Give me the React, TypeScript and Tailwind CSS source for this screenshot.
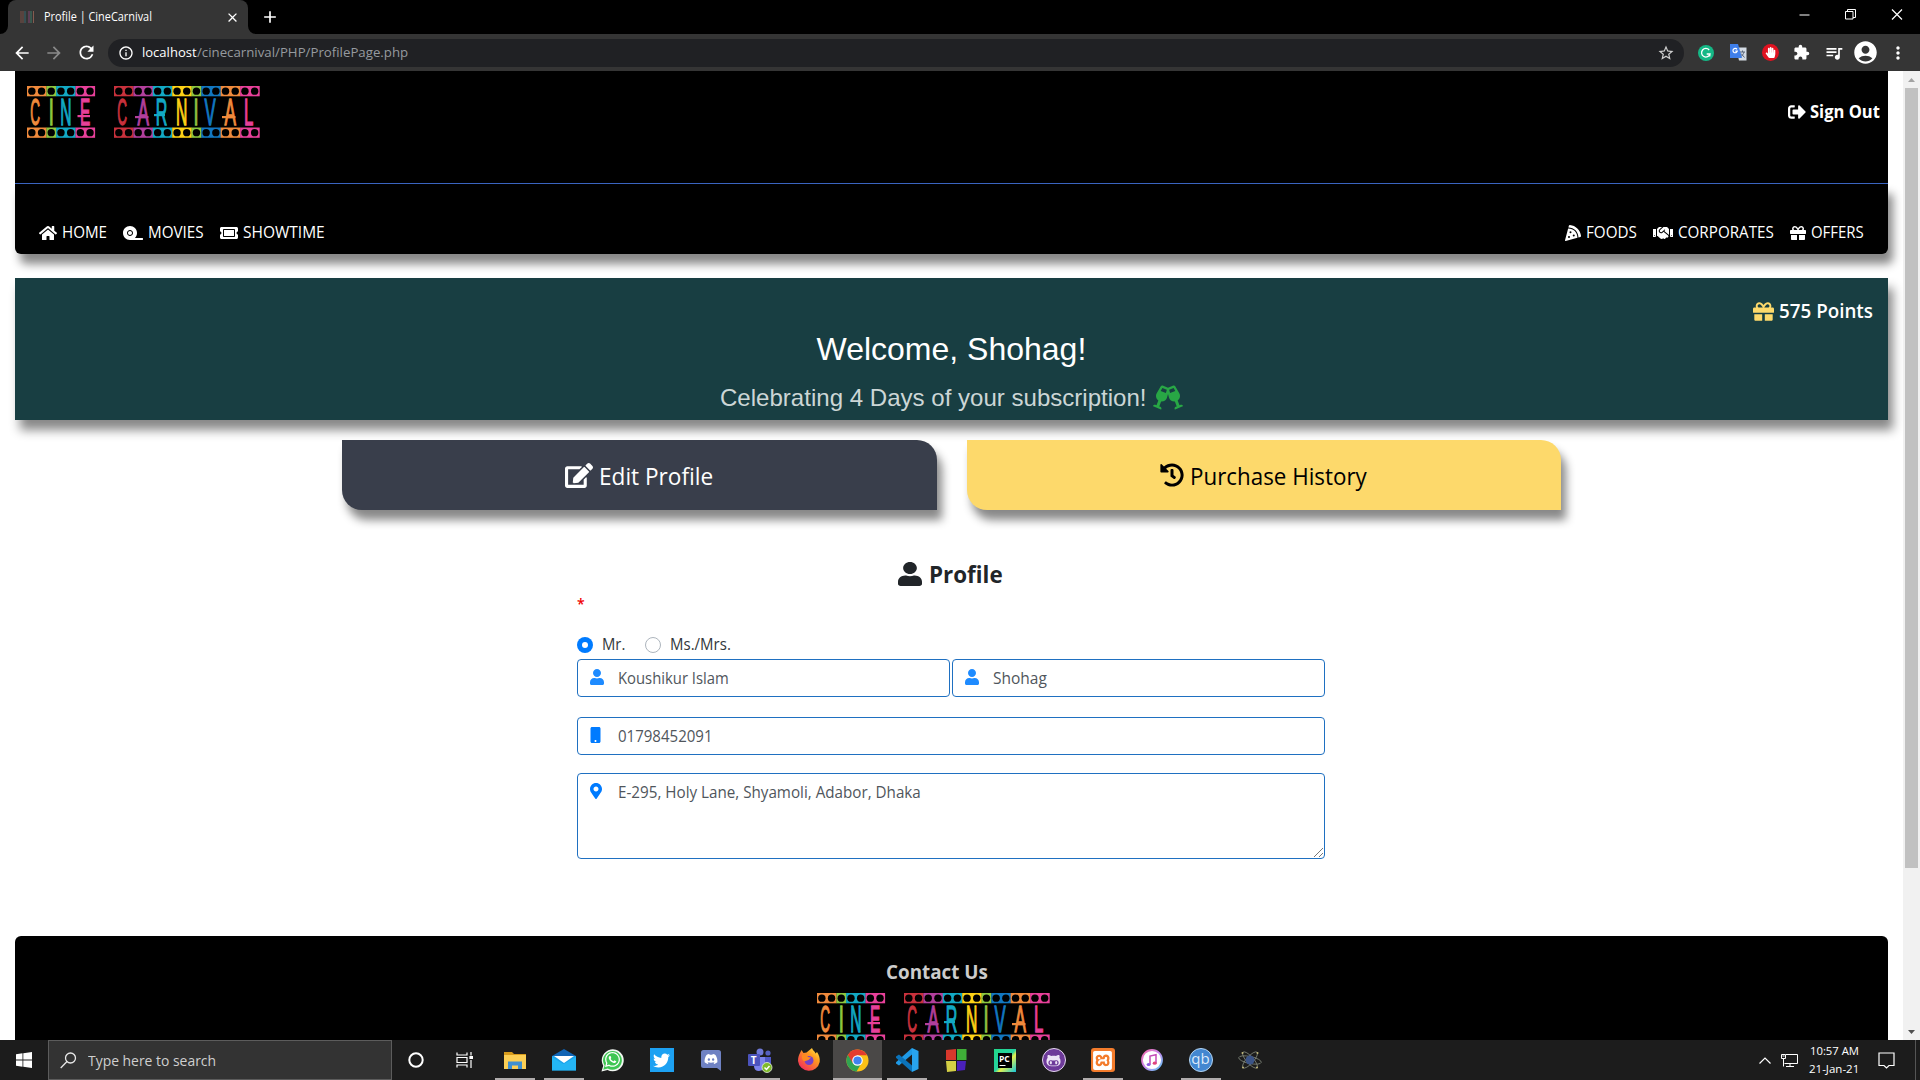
import React, { useLayoutEffect, useRef } from "react";
import {
  FaHome, FaTape, FaTicketAlt, FaPizzaSlice, FaHandshake, FaGift, FaSignOutAlt, FaGlassCheers, FaEdit,
  FaHistory, FaUser, FaMobile, FaMapMarkerAlt, FaHandPaper, FaTwitter, FaWhatsapp, FaDiscord, FaGithubAlt,
  FaMusic,
} from "react-icons/fa";
import {
  MdArrowBack, MdArrowForward, MdRefresh, MdInfoOutline, MdStarBorder, MdExtension, MdQueueMusic,
  MdAccountCircle, MdMoreVert, MdClose, MdAdd,
} from "react-icons/md";
import { SiXampp } from "react-icons/si";

/* One line of text condensed or widened to the width of its box. */
function Fit({ className, children }: { className: string; children: string }) {
  const inner = useRef<HTMLSpanElement>(null);
  useLayoutEffect(() => {
    const el = inner.current;
    if (!el || !el.parentElement) return;
    const apply = () => {
      el.style.transform = `scaleX(${el.parentElement!.clientWidth / el.offsetWidth})`;
    };
    apply();
    document.fonts.ready.then(apply);
  }, []);
  return (
    <span className={"inline-block shrink-0 whitespace-nowrap " + className}>
      <span ref={inner} className="inline-block origin-left">{children}</span>
    </span>
  );
}

/* x: left edge of the glyph's cell, s: its horizontal scale, bar: x start, x end and y of the swash */
type Seg = { ch: string; n: number; color: string; x: number; s: number; bar?: [number, number, number] };

const CINE: Seg[] = [
  { ch: "C", n: 2, color: "#f08a3c", x: 3.2, s: 0.37 },
  { ch: "I", n: 1, color: "#8cc63f", x: 21.8, s: 0.5 },
  { ch: "N", n: 2, color: "#12a9c4", x: 33.2, s: 0.43 },
  { ch: "E", n: 2, color: "#e8409a", x: 53, s: 0.42, bar: [50.5, 63, 32] },
];
const CARNIVAL: Seg[] = [
  { ch: "C", n: 2, color: "#c8313c", x: 90.2, s: 0.37 },
  { ch: "A", n: 2, color: "#b23f9c", x: 110.500, s: 0.47, bar: [108, 121.5, 33] },
  { ch: "R", n: 2, color: "#12a9c4", x: 128.7, s: 0.44, bar: [127, 138, 31] },
  { ch: "N", n: 2, color: "#fdd116", x: 149, s: 0.43 },
  { ch: "I", n: 1, color: "#8cc63f", x: 166.400, s: 0.5 },
  { ch: "V", n: 2, color: "#1277c0", x: 177.5, s: 0.46 },
  { ch: "A", n: 2, color: "#f08a3c", x: 197.5, s: 0.47, bar: [195, 208.5, 33] },
  { ch: "L", n: 2, color: "#e8409a", x: 217, s: 0.46 },
];

function LogoWord({ segs, x0 }: { segs: Seg[]; x0: number }) {
  const pitch = 9.7;
  let k = 0;
  return (
    <g>
      {segs.map((s, i) => {
        const start = x0 + k * pitch;
        const circles = Array.from({ length: s.n }, (_, j) => start + (j + 0.5) * pitch);
        k += s.n;
        return (
          <g key={i} fill={s.color}>
            {[0, 41.5].map((y) => (
              <g key={y}>
                <rect x={start} y={y} width={s.n * pitch + 0.2} height="10.3" />
                {circles.map((c) => <circle key={c} cx={c} cy={y + 5.15} r="3.700" fill="#000" />)}
              </g>
            ))}
            <text
              transform={`translate(${s.x} 39) scale(${s.s} 1)`}
              fontSize="36.500" fontFamily="Liberation Sans" stroke={s.color} strokeWidth="1" vectorEffect="non-scaling-stroke"
            >
              {s.ch}
            </text>
            {s.bar && <rect x={s.bar[0]} y={s.bar[2] - 3} width={s.bar[1] - s.bar[0]} height="2.200" />}
          </g>
        );
      })}
    </g>
  );
}

function Logo() {
  return (
    <svg width="233" height="52" viewBox="0 0 233 52" className="block shrink-0">
      <LogoWord segs={CINE} x0={0} />
      <LogoWord segs={CARNIVAL} x0={87} />
    </svg>
  );
}

function Browser() {
  return (
    <div className="shrink-0 bg-black text-white">
      <div className="flex h-[34px] items-end">
        <svg width="8" height="8" className="block"><path d="M8 0v8H0a8 8 0 0 0 8-8z" fill="#353535" /></svg>
        <div className="flex h-[34px] w-[240px] items-center rounded-t-[8px] bg-[#353535] pl-3">
          <svg width="15" height="14" viewBox="0 0 15 14">
            <path d="M1 1v12M3 1v12" stroke="#7c5348" />
            <path d="M5 1v12" stroke="#386b70" />
            <path d="M9 1v12" stroke="#864572" />
            <path d="M11 1v12" stroke="#3e7c69" />
            <path d="M13.500 1v12" stroke="#855c50" />
          </svg>
          <Fit className="ml-[9px] w-[108px] text-[12px]">Profile | CineCarnival</Fit>
          <MdClose className="ml-[73px] h-[15px] w-[15px]" />
        </div>
        <svg width="8" height="8" className="block"><path d="M0 0v8h8a8 8 0 0 1-8-8z" fill="#353535" /></svg>
        <MdAdd className="mb-[7px] ml-[4px] h-5 w-5" />
        <div className="mr-[17px] mb-[14px] ml-auto flex items-center gap-[35px]">
          <svg width="11" height="11"><path d="M0.500 6h10" stroke="#fff" /></svg>
          <svg width="11" height="11" fill="none" stroke="#fff"><path d="M.5 2.500h7.500v7.500h-7.500zM2.500 2.500v-2h8v8h-2.500" /></svg>
          <svg width="12" height="11" stroke="#fff" strokeWidth="1.200"><path d="M1 .5l10 10M11 .5l-10 10" /></svg>
        </div>
      </div>
      <div className="flex h-[37px] items-center bg-[#353535]">
        <MdArrowBack className="ml-[12px] h-5 w-5" />
        <MdArrowForward className="ml-[12px] h-5 w-5 text-[#8a8a8a]" />
        <MdRefresh className="ml-[12px] h-[21px] w-[21px]" />
        <div className="ml-[11px] flex h-7 w-[1576px] items-center rounded-full bg-[#202124] pl-[10px] text-[14px]">
          <MdInfoOutline className="h-4 w-4" />
          <Fit className="ml-[8px] w-[55px] text-[13.500px]">localhost</Fit>
          <Fit className="w-[211px] text-[13.500px] text-[#969a9f]">/cinecarnival/PHP/ProfilePage.php</Fit>
          <MdStarBorder className="mr-[9px] ml-auto h-[18px] w-[18px] text-[#d0d0d0]" />
        </div>
        <svg width="16" height="16" viewBox="0 0 16 16" className="ml-[14px]">
          <circle cx="8" cy="8" r="8" fill="#15b886" />
          <path d="M11.200 5A4.300 4.300 0 1 0 12 9H8.700M12 9l-.3 2.500" fill="none" stroke="#fff" strokeWidth="1.300" />
        </svg>
        <svg width="17" height="17" viewBox="0 0 17 17" className="ml-[16px]">
          <path d="M6 3.500h10.500v13H9z" fill="#d4dbe4" />
          <path d="M10 8h5M12.500 6.500V8M14 8c-.5 2-2 4-3.500 5M11 9.500l3.500 4" stroke="#5a6678" fill="none" />
          <path d="M0 0h8l4 14H0z" fill="#3f7fea" />
          <path d="M7 5.300A2.200 2.200 0 1 0 7.300 7.200H5.300" stroke="#fff" strokeWidth="1.200" fill="none" />
        </svg>
        <div className="ml-[15px] flex h-[17px] w-[17px] items-center justify-center rounded-full bg-[#e01220]">
          <FaHandPaper className="h-[11px] w-[11px]" />
        </div>
        <MdExtension className="ml-[14px] h-[17px] w-[17px]" />
        <MdQueueMusic className="ml-[14px] h-5 w-5" />
        <MdAccountCircle className="ml-[8px] h-[27px] w-[27px]" />
        <MdMoreVert className="ml-[9px] h-5 w-5" />
      </div>
    </div>
  );
}

function Header() {
  return (
    <header className="w-[1873px] text-white">
      <div className="flex h-[112px] justify-between bg-black pt-[15px] pr-[8px] pl-[12px]">
        <Logo />
        <div className="flex h-[52px] items-center">
          <FaSignOutAlt className="h-[18px] w-[18px]" />
          <Fit className="ml-[4px] w-[70px] text-[17px] font-bold">Sign Out</Fit>
        </div>
      </div>
      <div className="h-px bg-[#3a64c0]" />
      <nav className="flex h-[70px] items-center rounded-b-[6px] bg-black px-6 pt-[27px] text-[15.500px] shadow-[5px_10px_10px_#888888]">
        <FaHome className="h-4 w-[18px]" />
        <Fit className="ml-[5px] w-[45px]">HOME</Fit>
        <FaTape className="ml-[16px] h-4 w-5" />
        <Fit className="ml-[5px] w-[56px]">MOVIES</Fit>
        <FaTicketAlt className="ml-[16px] h-4 w-[18px]" />
        <Fit className="ml-[5px] w-[82px]">SHOWTIME</Fit>
        <FaPizzaSlice className="ml-auto h-4 w-4" />
        <Fit className="ml-[5px] w-[51px]">FOODS</Fit>
        <FaHandshake className="ml-[16px] h-4 w-5" />
        <Fit className="ml-[5px] w-[96px]">CORPORATES</Fit>
        <FaGift className="ml-[16px] h-4 w-4" />
        <Fit className="ml-[5px] w-[53px]">OFFERS</Fit>
      </nav>
    </header>
  );
}

function Banner() {
  return (
    <section className="mt-6 flex h-[142px] w-[1873px] flex-col items-center bg-[#183e42] text-white shadow-[5px_10px_10px_#888888]">
      <div className="mt-[19px] mr-[15px] flex h-7 items-center self-end">
        <FaGift className="h-[21px] w-[21px] text-[#fdd96b]" />
        <Fit className="ml-[5px] w-[94px] text-[19px] font-semibold">575 Points</Fit>
      </div>
      <div className="mt-[4px] flex h-10 items-center font-['Liberation_Sans',sans-serif] text-[32px]">
        <Fit className="w-[270px]">Welcome, Shohag!</Fit>
      </div>
      <div className="mt-[13px] flex h-8 items-center font-['Liberation_Sans',sans-serif] text-[24px] text-[#ccd6d6]">
        <Fit className="w-[427px]">Celebrating 4 Days of your subscription!</Fit>
        <FaGlassCheers className="mb-[2px] ml-[6px] h-[25px] w-[30px] text-[#28a745]" />
      </div>
    </section>
  );
}

function Profile() {
  const field = "flex rounded-[4px] border border-[#1f70c1] bg-white pl-[12px] text-[15.500px] text-[#50565c]";
  return (
    <section className="ml-[562px] flex w-[748px] flex-col">
      <div className="mt-[46px] flex h-9 items-center justify-center pr-[2px] text-[#212529]">
        <FaUser className="h-6 w-[24px]" preserveAspectRatio="none" />
        <Fit className="ml-[7px] w-[74px] text-[23px] font-bold">Profile</Fit>
      </div>
      <div className="mt-[3px] h-[18px] text-[14px] leading-[18px] font-semibold text-[#f00000]">*</div>
      <div className="mt-[21px] flex h-[22px] items-center text-[15.500px] text-[#32373c]">
        <span className="flex h-4 w-4 items-center justify-center rounded-full bg-[#007bff]"><span className="h-[6px] w-[6px] rounded-full bg-white" /></span>
        <Fit className="ml-[9px] w-[23px]">Mr.</Fit>
        <span className="ml-[20px] h-4 w-4 rounded-full border border-[#adb5bd]" />
        <Fit className="ml-[9px] w-[61px]">Ms./Mrs.</Fit>
      </div>
      <div className="mt-[3px] flex gap-[2px]">
        <div className={field + " h-[38px] w-[373px] items-center"}>
          <FaUser className="mb-[2px] h-4 w-[14px] text-[#1e8bff]" />
          <Fit className="mt-[2px] ml-[14px] w-[111px]">Koushikur Islam</Fit>
        </div>
        <div className={field + " h-[38px] w-[373px] items-center"}>
          <FaUser className="mb-[2px] h-4 w-[14px] text-[#1e8bff]" />
          <Fit className="mt-[2px] ml-[14px] w-[54px]">Shohag</Fit>
        </div>
      </div>
      <div className={field + " mt-5 h-[38px] items-center"}>
        <FaMobile className="mb-[2px] h-4 w-[11px] text-[#007bff]" />
        <Fit className="mt-[2px] ml-[17px] w-[95px]">01798452091</Fit>
      </div>
      <div className={field + " mt-[18px] h-[86px] justify-between"}>
        <div className="flex">
          <FaMapMarkerAlt className="mt-[9px] h-4 w-3 text-[#007bff]" />
          <Fit className="mt-[7px] ml-[16px] w-[303px]">E-295, Holy Lane, Shyamoli, Adabor, Dhaka</Fit>
        </div>
        <svg width="11" height="11" className="self-end" stroke="#777"><path d="M1 10l9-9M6 10l4-4" /></svg>
      </div>
    </section>
  );
}

function Page() {
  return (
    <div className="flex h-[969px] shrink-0 overflow-hidden bg-white">
      <div className="h-full w-[1903px] overflow-hidden pl-[15px]">
        <Header />
        <Banner />
        <div className="mt-5 ml-[327px] flex gap-[30px] text-[23px]">
          <div className="flex h-[70px] w-[595px] items-center justify-center rounded-tr-[20px] rounded-bl-[20px] bg-[#393e4b] pt-[3px] pr-[2px] text-white shadow-[5px_10px_10px_#888888]">
            <FaEdit className="mb-[3px] h-[25px] w-[28px]" />
            <Fit className="ml-[6px] w-[114px]">Edit Profile</Fit>
          </div>
          <div className="flex h-[70px] w-[594px] items-center justify-center rounded-tr-[20px] rounded-bl-[20px] bg-[#fdd96b] pt-[3px] pr-[2px] text-black shadow-[5px_10px_10px_#888888]">
            <FaHistory className="mb-[3px] h-6 w-6" />
            <Fit className="ml-[6px] w-[177px]">Purchase History</Fit>
          </div>
        </div>
        <Profile />
        <footer className="mt-[77px] flex h-[180px] w-[1873px] flex-col items-center rounded-t-[6px] bg-black">
          <div className="mt-[22px] mr-[30px] flex h-7 items-center text-[19px] font-bold text-[#cccccc]">
            <Fit className="w-[102px]">Contact Us</Fit>
          </div>
          <div className="mt-[7px] mr-[37px]"><Logo /></div>
        </footer>
      </div>
      <div className="flex w-[17px] flex-col items-center bg-[#f1f1f1]">
        <div className="flex h-[17px] items-center"><svg width="7" height="4"><path d="M0 4l3.500-4L7 4z" fill="#a3a3a3" /></svg></div>
        <div className="h-[780px] w-[13px] bg-[#c1c1c1]" />
        <div className="mt-auto flex h-[17px] items-center"><svg width="7" height="4"><path d="M0 0l3.500 4L7 0z" fill="#505050" /></svg></div>
      </div>
    </div>
  );
}

function AppSlot({ children, open, active }: { children: React.ReactNode; open?: boolean; active?: boolean }) {
  return (
    <div className={"flex h-10 w-[49px] flex-col items-center justify-between " + (active ? "bg-[#4a4847]" : "")}>
      <div className="flex h-[38px] items-center pt-[2px]">{children}</div>
      {open && <div className={"h-[2px] shrink-0 bg-[#b0acac] " + (active ? "w-[49px]" : "w-10")} />}
    </div>
  );
}

function Taskbar() {
  return (
    <div className="flex h-10 shrink-0 items-center bg-[#1c1c1c] text-white">
      <svg width="16" height="16" viewBox="0 0 16 16" className="ml-4" fill="#fff"><path d="M0 2.200l6.500-.9v6.300H0zM7.300 1.200L16 0v7.600H7.300zM0 8.400h6.500v6.300L0 13.800zM7.300 8.400H16V16l-8.700-1.200z" /></svg>
      <div className="ml-4 flex h-10 w-[344px] items-center border border-[#5c5c5c] bg-[#333333] pl-[11px]">
        <svg width="17" height="17" fill="none" stroke="#e8e8e8" strokeWidth="1.300"><circle cx="10.500" cy="6" r="5" /><path d="M7 9.500L.7 16" /></svg>
        <Fit className="ml-[11px] w-[128px] text-[15px] text-[#cfcfcf]">Type here to search</Fit>
      </div>
      <div className="flex">
        <AppSlot><svg width="16" height="16" className="mr-[2px]"><circle cx="8" cy="8" r="6.700" fill="none" stroke="#fff" strokeWidth="2" /></svg></AppSlot>
        <AppSlot>
          <svg width="17" height="16" className="mr-[3px]" fill="none" stroke="#fff" strokeWidth="1.200"><path d="M1 .5v2.500h10V.5M1 15.500V13h10v2.500M1 5.500h10v5H1zM15 0v3.500M15 8v8" /><path d="M14 4.500h2.500v2H14z" fill="#fff" /></svg>
        </AppSlot>
        <AppSlot open>
          <svg width="22" height="19" viewBox="0 0 22 19">
            <path d="M0 1h8l2 2h12v5H0z" fill="#d79b1c" /><path d="M0 4h22v14H0z" fill="#fccf55" />
            <path d="M4 18v-7.500h14V18h-4v-3.500H8V18z" fill="#3f8fd0" />
          </svg>
        </AppSlot>
        <AppSlot open>
          <svg width="24" height="22" viewBox="0 0 24 22">
            <path d="M0 7L12 0l12 7v5H0z" fill="#1164b4" /><path d="M0 7h24v14.500H0z" fill="#1ba1ea" />
            <path d="M2 7h20l-10 7z" fill="#fff" /><path d="M0 8l12 7.500L0 21.500z" fill="#23b6f4" /><path d="M24 8v13.500H0z" fill="#2abdf8" fillOpacity=".7" />
          </svg>
        </AppSlot>
        <AppSlot>
          <svg width="23" height="23" viewBox="0 0 23 23"><path d="M0.500 22.500L2.200 16.800A11 11 0 1 1 6.500 21z" fill="#f2f7f2" /><path d="M2.200 20.800L3.600 16.500A9.400 9.400 0 1 1 6.800 19.500z" fill="#3fc653" /></svg>
          <FaWhatsapp className="-ml-[20px] mr-[3px] mb-[1px] h-[17px] w-[17px]" />
        </AppSlot>
        <AppSlot><div className="flex h-6 w-6 items-center justify-center bg-[#1da1f2]"><FaTwitter className="h-[17px] w-[17px]" /></div></AppSlot>
        <AppSlot>
          <svg width="20" height="21" viewBox="0 0 20 21"><path d="M2.500 0h15Q20 0 20 2.500V21l-4-3H2.500Q0 18 0 15.500v-13Q0 0 2.500 0z" fill="#6f82c3" /></svg>
          <FaDiscord className="-ml-[17px] mr-[3px] mb-[3px] h-[14px] w-[14px]" />
        </AppSlot>
        <AppSlot open>
          <svg width="26" height="25" viewBox="0 0 26 25">
            <circle cx="13" cy="4" r="3.500" fill="#6f79d8" /><circle cx="21" cy="5" r="2.600" fill="#5560c0" />
            <path d="M17 9h7v8q-1 4-6 4z" fill="#5059c9" /><path d="M7 9h11v9q-1 5-6 5t-5-5z" fill="#7b83eb" />
            <rect x="1" y="6" width="12" height="12" rx="1" fill="#4b53bc" />
            <text x="3.700" y="15.500" fontSize="10" fontWeight="700" fill="#fff" fontFamily="Open Sans">T</text>
            <circle cx="20" cy="19.500" r="5" fill="#7fba2a" stroke="#e8f0e0" strokeWidth=".8" /><path d="M17.500 19.500l2 2 3-3.500" stroke="#fff" strokeWidth="1.500" fill="none" />
          </svg>
        </AppSlot>
        <AppSlot>
          <svg width="24" height="24" viewBox="0 0 24 24">
            <defs><linearGradient id="fx" x1="1" y1="0" x2=".2" y2="1"><stop offset="0" stopColor="#fff44f" /><stop offset=".4" stopColor="#ff9a1f" /><stop offset="1" stopColor="#f3295c" /></linearGradient></defs>
            <path d="M3 5l1.500-3L6.500 5l3-.5L15 0c1 3 3 3 3.500 5.500L20 4c2 3 3.200 6 2.700 10A11 11 0 0 1 1 13C1 9 2 7 3 5z" fill="url(#fx)" />
            <circle cx="12" cy="12.500" r="4.500" fill="#7541c7" /><path d="M5 7c3-1 5 0 6 2l3 .5-2.500 2.500-3 1c-2 1-3-1-3.500-3z" fill="#ff8a20" />
          </svg>
        </AppSlot>
        <AppSlot open active>
          <svg width="23" height="23" viewBox="0 0 24 24">
            <circle cx="12" cy="12" r="11.500" fill="#fbc116" />
            <path d="M12 12L2 6.200A11.500 11.500 0 0 0 11 23.500L16.500 14z" fill="#30a452" />
            <path d="M2 6.200A11.500 11.500 0 0 1 22 6.500H12L7 14.500z" fill="#e33b2e" />
            <circle cx="12" cy="12" r="5.500" fill="#fff" /><circle cx="12" cy="12" r="4.300" fill="#3f82f0" />
          </svg>
        </AppSlot>
        <AppSlot open>
          <svg width="24" height="24" viewBox="0 0 24 24">
            <path d="M17 0l6.500 3v18L17 24z" fill="#28a4ee" /><path d="M17 0v6.500L4 17.500 1 15.500v-1.200z" fill="#1f9ae6" /><path d="M17 24v-6.500L4 6.500 1 8.500v1.200z" fill="#0b73ba" />
          </svg>
        </AppSlot>
        <AppSlot>
          <svg width="22" height="23" viewBox="0 0 22 23">
            <path d="M1 1l10-1v11H1z" fill="#d8382c" /><path d="M12 0h9.500v11H12z" fill="#3fae38" /><path d="M1 12h10v10l-9 1z" fill="#d3cf45" /><path d="M12 12h9l-1 9-8 1z" fill="#4a20ba" />
          </svg>
        </AppSlot>
        <AppSlot>
          <svg width="22" height="23" viewBox="0 0 22 23">
            <defs><linearGradient id="pc" x1="0" y1="0" x2="1" y2="1"><stop offset="0" stopColor="#21d789" /><stop offset=".5" stopColor="#27d2a2" /><stop offset=".6" stopColor="#e5f04c" /><stop offset="1" stopColor="#12c4dd" /></linearGradient></defs>
            <rect width="22" height="23" fill="url(#pc)" /><rect x="4" y="4" width="14" height="15" fill="#000" />
            <text x="5" y="12.500" fontSize="8.500" fontWeight="700" fill="#fff" fontFamily="Open Sans">PC</text><path d="M5.500 16.500h6" stroke="#fff" />
          </svg>
        </AppSlot>
        <AppSlot><div className="flex h-6 w-6 items-center justify-center rounded-full border-[1.500px] border-[#e5d9ee] bg-[#6d3a99]"><FaGithubAlt className="h-[15px] w-[15px] text-[#ece3f5]" /></div></AppSlot>
        <AppSlot open><div className="flex h-[24px] w-[24px] items-center justify-center rounded-[3px] bg-[#f47c2c]"><SiXampp className="h-[19px] w-[19px]" /></div></AppSlot>
        <AppSlot>
          <svg width="22" height="22" viewBox="0 0 22 22">
            <defs><linearGradient id="it" x1="0" y1="0" x2="1" y2="1"><stop offset="0" stopColor="#f36aa8" /><stop offset=".5" stopColor="#c98af0" /><stop offset="1" stopColor="#5cc8f5" /></linearGradient></defs>
            <circle cx="11" cy="11" r="10" fill="#fff" stroke="url(#it)" strokeWidth="1.800" />
            <path d="M9 15.500V7l6-1.300v8.300" fill="none" stroke="#c64bb8" strokeWidth="1.500" /><ellipse cx="7.600" cy="15.500" rx="2" ry="1.600" fill="#8a5be0" /><ellipse cx="13.700" cy="14.200" rx="2" ry="1.600" fill="#e0457e" />
          </svg>
        </AppSlot>
        <AppSlot open><div className="flex h-6 w-6 items-center justify-center rounded-full border border-[#b5d5f2] bg-[#4387d0] pb-[3px] text-[15px] leading-none text-[#dceafa]">qb</div></AppSlot>
        <AppSlot>
          <svg width="24" height="20" viewBox="0 0 24 20" fill="none" stroke="#80867a" strokeWidth=".8">
            <ellipse cx="12" cy="10" rx="11.500" ry="3.500" transform="rotate(12 12 10)" /><ellipse cx="12" cy="10" rx="10.500" ry="3.500" transform="rotate(48 12 10)" /><ellipse cx="12" cy="10" rx="10.500" ry="3.500" transform="rotate(-48 12 10)" />
            <circle cx="12" cy="10" r="4.500" fill="#3b5487" stroke="none" />
            <g fill="#c2b878" stroke="none"><circle cx="4.500" cy="3" r="1" /><circle cx="19.500" cy="3" r="1" /><circle cx="5" cy="17.500" r="1" /><circle cx="19" cy="17.500" r="1" /></g>
          </svg>
        </AppSlot>
      </div>
      <svg width="12" height="7" className="ml-auto" fill="none" stroke="#fff" strokeWidth="1.200"><path d="M.5 6.500L6 1l5.500 5.500" /></svg>
      <svg width="17" height="14" className="ml-[10px]" fill="none" stroke="#fff"><path d="M5 1.500h11.500v9H3.500M2.500 6v7.500M5 13.500h8M9 10.500v3M.5 1.500h4v4h-4zM1.500 3h2" /></svg>
      <div className="ml-[8px] flex w-[56px] flex-col items-center text-[11.500px] leading-[18px]">
        <Fit className="w-[49px]">10:57 AM</Fit>
        <Fit className="w-[50px]">21-Jan-21</Fit>
      </div>
      <svg width="17" height="17" className="mr-[20px] ml-[16px]" fill="none" stroke="#fff" strokeWidth="1.200"><path d="M1 1h15v12.500h-5L8.500 16 6 13.500H1z" /></svg>
      <div className="mr-[4px] h-10 w-px bg-[#555]" />
    </div>
  );
}

export default function App() {
  return (
    <div className="flex h-[1080px] w-[1920px] flex-col overflow-hidden font-['Open_Sans','Noto_Sans',sans-serif]">
      <Browser />
      <Page />
      <Taskbar />
    </div>
  );
}
